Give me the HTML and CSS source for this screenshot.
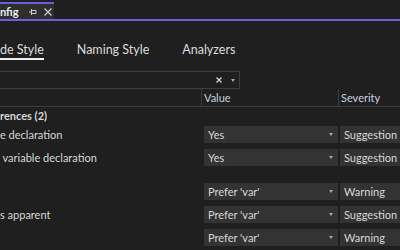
FILE: index.html
```html
<!DOCTYPE html>
<html lang="en">
<head>
  <meta charset="UTF-8" />
  <title>.editorconfig</title>
  <link rel="stylesheet" href="styles.css">
</head>
<body>
  <div class="doc-bar">
    <div class="doc-tab">
      <span class="doc-title">nfig</span>
      <svg class="pin" width="8" height="8" viewBox="0 0 8 8">
        <path d="M0 4h2.5M2.5 1v6M2.5 2.5h4.5v3h-4.5" fill="none" stroke="#cfcfcf" stroke-width="1"/>
      </svg>
      <svg class="close" width="8" height="8" viewBox="0 0 8 8">
        <path d="M0.5 0.5l7 7M7.5 0.5l-7 7" stroke="#cfcfcf" stroke-width="1.2"/>
      </svg>
    </div>
  </div>

  <nav class="page-tabs">
    <a class="page-tab current">de Style</a>
    <a class="page-tab">Naming Style</a>
    <a class="page-tab">Analyzers</a>
  </nav>

  <div class="search">
    <svg class="search-clear" width="6" height="6" viewBox="0 0 6 6">
      <path d="M0.5 0.5l5 5M5.5 0.5l-5 5" stroke="#d8d8d8" stroke-width="1.2"/>
    </svg>
    <span class="caret"></span>
  </div>

  <div class="grid">
    <div class="row head">
      <div class="cell"></div>
      <div class="cell sep">Value</div>
      <div class="cell sep">Severity</div>
    </div>

    <div class="row group"><div class="cell">rences (2)</div></div>

    <div class="row item">
      <div class="cell label">e declaration</div>
      <div class="cell val"><div class="combo">Yes<span class="caret"></span></div></div>
      <div class="cell sev"><div class="combo">Suggestion</div></div>
    </div>
    <div class="row item">
      <div class="cell label">&nbsp;variable declaration</div>
      <div class="cell val"><div class="combo">Yes<span class="caret"></span></div></div>
      <div class="cell sev"><div class="combo">Suggestion</div></div>
    </div>

    <div class="row spacer"></div>

    <div class="row item">
      <div class="cell label"></div>
      <div class="cell val"><div class="combo">Prefer 'var'<span class="caret"></span></div></div>
      <div class="cell sev"><div class="combo">Warning</div></div>
    </div>
    <div class="row item">
      <div class="cell label">s apparent</div>
      <div class="cell val"><div class="combo">Prefer 'var'<span class="caret"></span></div></div>
      <div class="cell sev"><div class="combo">Suggestion</div></div>
    </div>
    <div class="row item">
      <div class="cell label"></div>
      <div class="cell val"><div class="combo">Prefer 'var'<span class="caret"></span></div></div>
      <div class="cell sev"><div class="combo">Warning</div></div>
    </div>
  </div>
</body>
</html>
```

FILE: styles.css
```css
:root {
  --bg: #1f1f1f;
  --line: #3d3d3d;
  --text: #d8d8d8;
  --accent: #6c5ce0;
  --combo: #333333;
}

body {
  margin: 0;
  background: var(--bg);
  color: var(--text);
  font-family: Lato, "Noto Sans", sans-serif;
  font-size: 11px;
  overflow: hidden;
}

.doc-bar {
  height: 17px;
  padding-top: 2px;
  border-bottom: 2px solid var(--accent);
  display: flex;
}

.doc-tab {
  width: 54px;
  height: 15px;
  border-top: 2px solid var(--accent);
  background: #2e2e2e;
  display: flex;
  align-items: center;
}

.doc-title {
  font-weight: 700;
  color: #f0f0f0;
  line-height: 15px;
}

.pin {
  margin-left: 10px;
}

.close {
  margin-left: 7px;
}

.page-tabs {
  display: flex;
  gap: 33px;
  padding-top: 21px;
}

.page-tab {
  font-size: 12.5px;
  line-height: 16px;
  padding-bottom: 2px;
  color: #dcdcdc;
}

.page-tab.current {
  border-bottom: 2px solid #f0f0f0;
  padding-bottom: 0;
}

.search {
  margin-top: 11px;
  width: 235px;
  height: 16px;
  border: 1px solid var(--line);
  border-left: none;
  display: flex;
  align-items: center;
  justify-content: flex-end;
  gap: 9px;
  padding-right: 4px;
}

.caret {
  width: 0;
  height: 0;
  border-left: 2.5px solid transparent;
  border-right: 2.5px solid transparent;
  border-top: 3px solid #a8a8a8;
}

.row {
  display: grid;
  grid-template-columns: 201px 137px 1fr;
  align-items: center;
}

.head {
  height: 17px;
  border-bottom: 1px solid var(--line);
  color: #c9d1dc;
}

.head .sep {
  border-left: 1px solid var(--line);
  height: 17px;
  line-height: 17px;
  padding-left: 2px;
}

.group {
  height: 16px;
  font-weight: 700;
}

.spacer {
  height: 11px;
}

.item {
  height: 23px;
}

.label {
  white-space: nowrap;
}

.val {
  padding-left: 3px;
}

.sev {
  padding-left: 2px;
}

.combo {
  height: 17px;
  background: var(--combo);
  display: flex;
  align-items: center;
  justify-content: space-between;
  padding: 0 5px 0 4px;
  white-space: nowrap;
}
```
